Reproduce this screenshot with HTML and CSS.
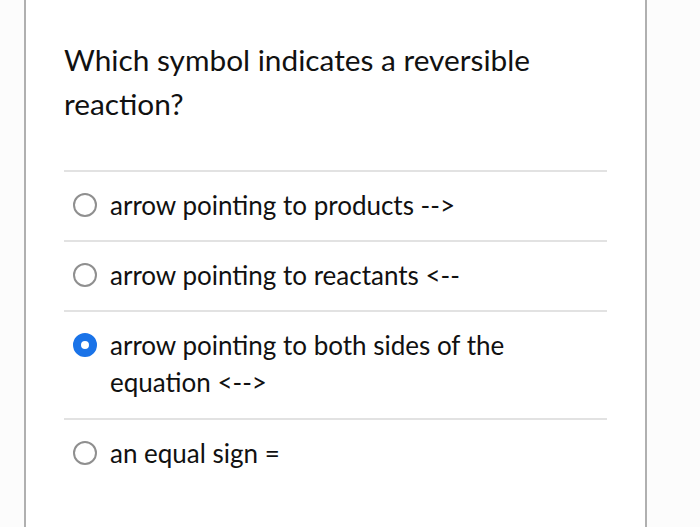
FILE: index.html
```html
<!DOCTYPE html>
<html lang="en">
<head>
    <meta charset="UTF-8">
    <title>Question</title>
    <link rel="stylesheet" href="styles.css">
</head>
<body>
    <div class="card">
        <h2 class="question">Which symbol indicates a reversible reaction?</h2>
        <ul class="answers">
            <li class="answer">
                <span class="radio"></span>
                <span class="label">arrow pointing to products --&gt;</span>
            </li>
            <li class="answer">
                <span class="radio"></span>
                <span class="label">arrow pointing to reactants &lt;--</span>
            </li>
            <li class="answer tall">
                <span class="radio checked"></span>
                <span class="label">arrow pointing to both sides of the equation &lt;--&gt;</span>
            </li>
            <li class="answer">
                <span class="radio"></span>
                <span class="label">an equal sign =</span>
            </li>
        </ul>
    </div>
</body>
</html>
```

FILE: styles.css
```css
body {
    margin: 0;
    background-color: #fcfcfc;
    font-family: Lato, "Liberation Sans", sans-serif;
    color: #111;
}

.card {
    width: 623px;
    min-height: 527px;
    margin-left: 24px;
    box-sizing: border-box;
    padding: 38px 38px 0 38px;
    background-color: #fff;
    border-left: 2px solid #b0b0b0;
    border-right: 2px solid #b0b0b0;
}

.question {
    margin: 0;
    font-size: 29.8px;
    font-weight: normal;
    line-height: 44px;
    padding-right: 50px;
}

.answers {
    list-style: none;
    margin: 44px 0 0 0;
    padding: 0;
}

.answer {
    display: flex;
    align-items: flex-start;
    border-top: 2px solid #e2e2e2;
    padding: 15px 0 16px 0;
    font-size: 26px;
    line-height: 37px;
}

.answer.tall {
    padding-bottom: 17px;
}

.radio {
    flex: none;
    width: 20px;
    height: 20px;
    margin: 6px 13px 0 9px;
    border: 2px solid #8f8f8f;
    border-radius: 50%;
}

.radio.checked {
    width: 8px;
    height: 8px;
    border: 8px solid #1a73e8;
}

.label {
    padding-right: 80px;
}
```
